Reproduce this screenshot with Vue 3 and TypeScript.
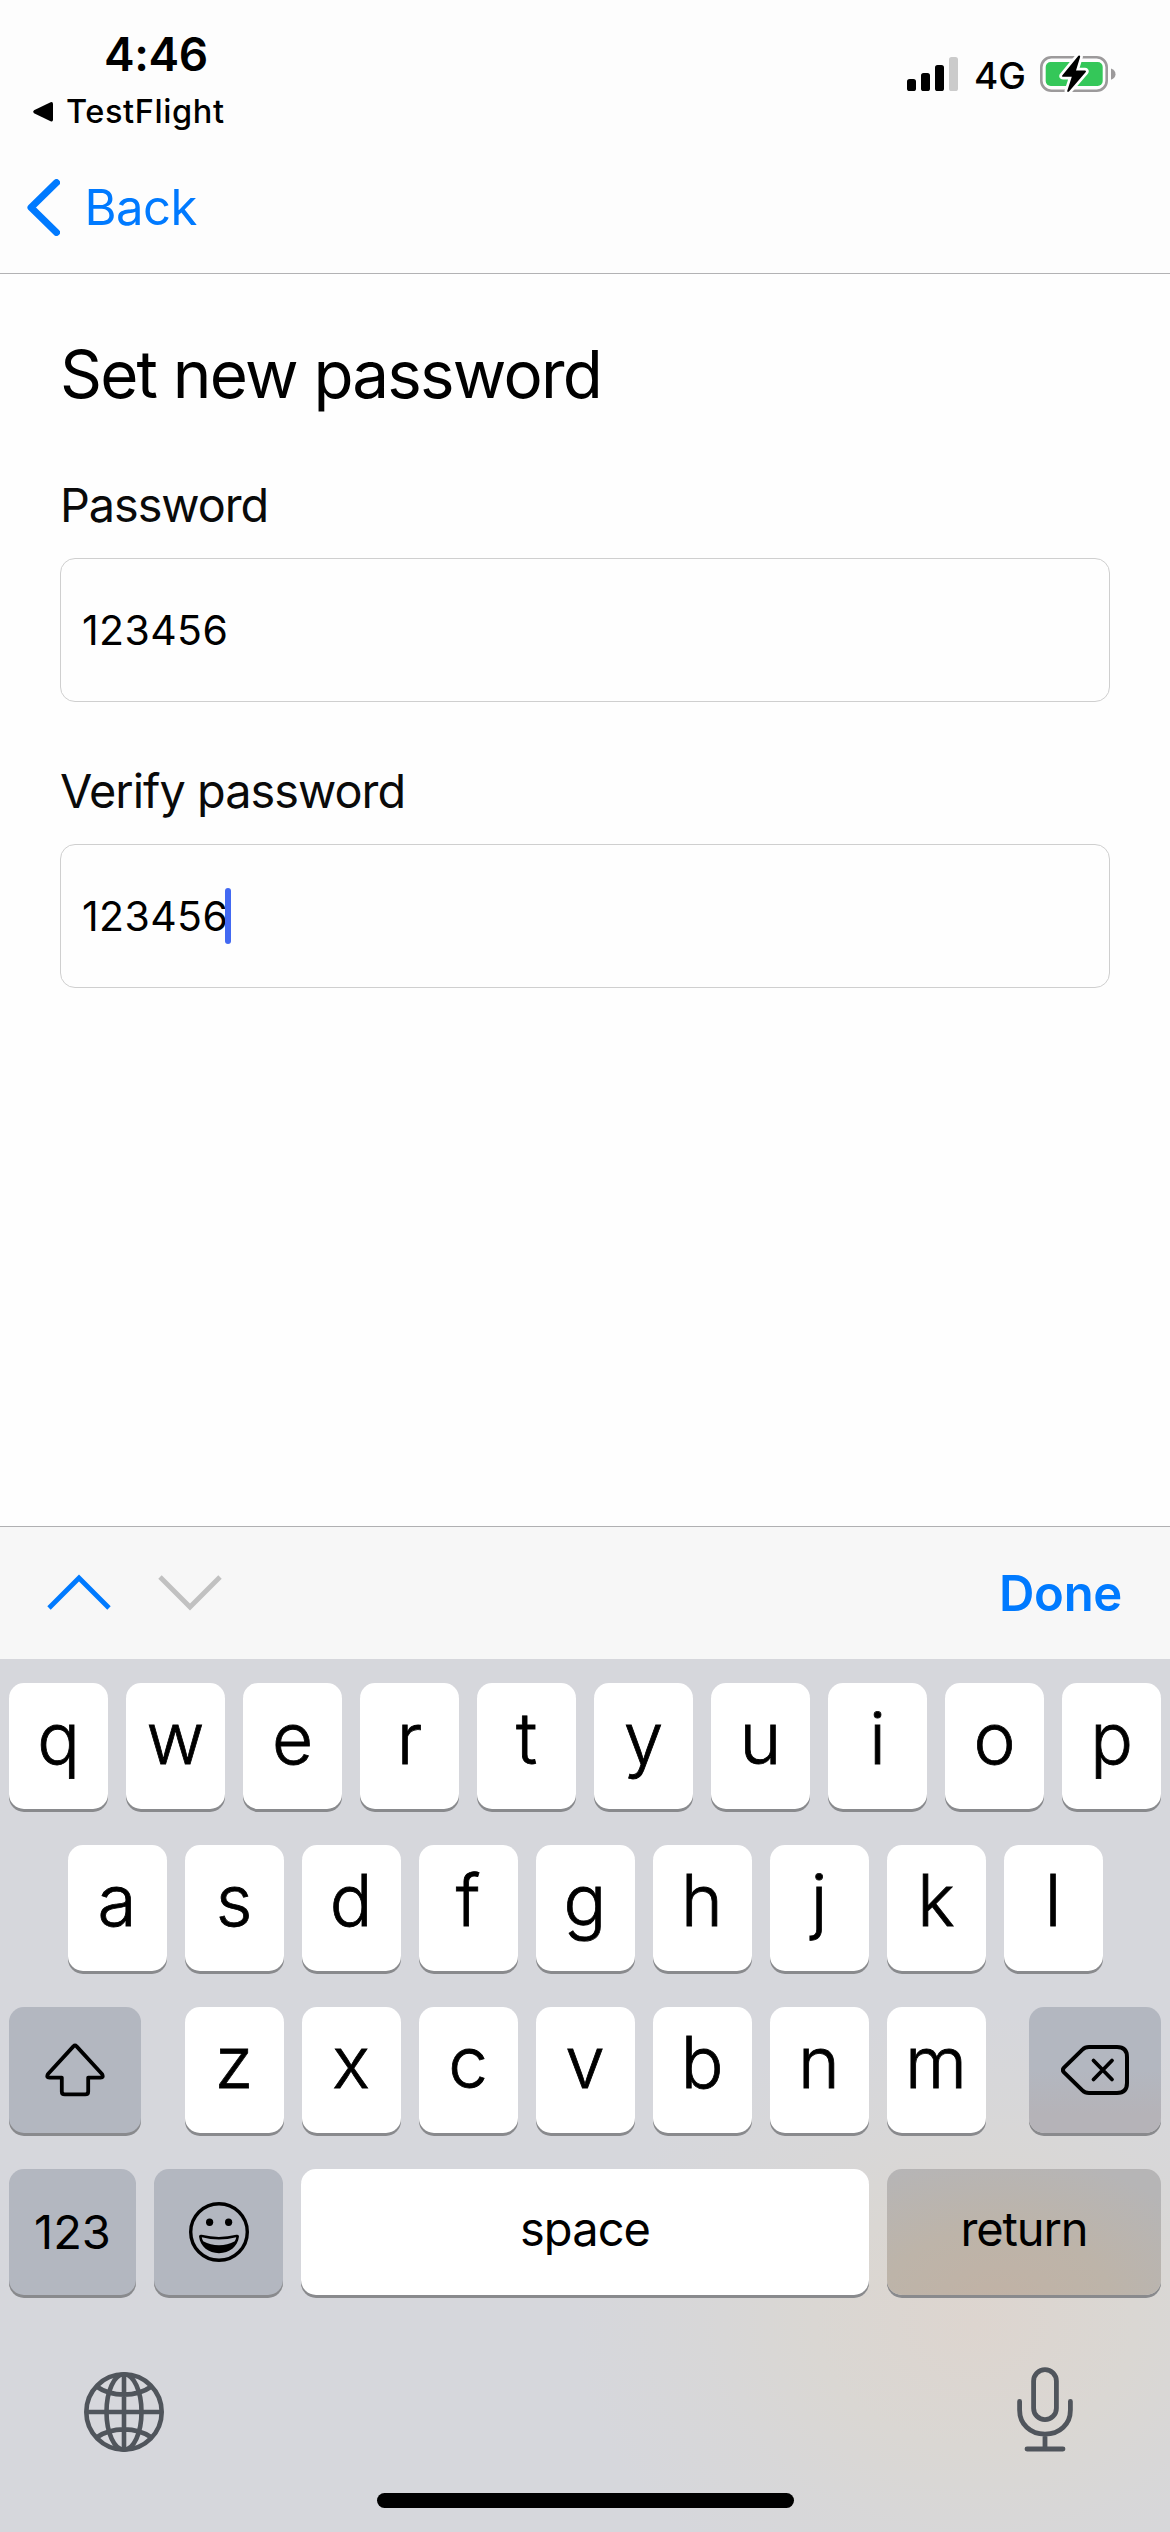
<script setup lang="ts">
import { ref } from 'vue'

const password = ref('123456')
const verify = ref('123456')

const topRow: string[] = [...'qwertyuiop']
const homeRow: string[] = [...'asdfghjkl']
const bottomRow: string[] = [...'zxcvbnm']
</script>

<template>
  <div class="screen">
    <header class="header">
      <div class="status">
        <div class="status-left">
          <div class="time">4:46</div>
          <div class="return-app">
            <svg width="22" height="22" viewBox="0 0 22 22">
              <path d="M2 9.3 L18.6 1.2 Q21 .4 21 3 V18.6 Q21 21.2 18.6 20.2 L2 12.2 Q.2 10.8 2 9.3Z" />
            </svg>
            <span>TestFlight</span>
          </div>
        </div>
        <div class="status-right">
          <svg class="signal" width="51" height="34" viewBox="0 0 51 34">
            <rect x="0" y="22" width="9" height="12" rx="2.6" />
            <rect x="14" y="16" width="9" height="18" rx="2.6" />
            <rect x="28" y="8" width="9" height="26" rx="2.6" />
            <rect x="42" y="0" width="9" height="34" rx="2.6" fill="#cbcbcb" />
          </svg>
          <span class="network">4G</span>
          <svg class="battery" width="76" height="40" viewBox="0 0 76 40">
            <rect x="1.3" y="3.3" width="65.4" height="33.4" rx="10" fill="none" stroke="#9c9a9b" stroke-width="2.6" />
            <rect x="5.7" y="8" width="57" height="24" rx="5" fill="#34c759" />
            <path d="M71 14.6 Q75.5 16.5 75.5 20.2 Q75.5 24 71 25.8Z" fill="#9c9a9b" />
            <path
              d="M38.4 1.8 L22.2 21.4 Q21.4 22.8 23 22.8 H31.8 L27.2 37 Q27.4 38.6 29 37.6 L45.8 18 Q46.6 16.6 45 16.5 H36 L40.2 2.8 Q40 1 38.4 1.8Z"
              fill="#000" stroke="#fff" stroke-width="5.4" stroke-linejoin="round" paint-order="stroke"
            />
          </svg>
        </div>
      </div>
      <nav class="nav">
        <svg width="33" height="57" viewBox="0 0 33 57">
          <path d="M29.5 3.6 L4 28.5 L29.5 53.4" fill="none" stroke="#007aff" stroke-width="7" stroke-linecap="round" stroke-linejoin="round" />
        </svg>
        <span>Back</span>
      </nav>
    </header>

    <main class="content">
      <h1>Set new password</h1>
      <label class="first">Password</label>
      <div class="field"><span>{{ password }}</span></div>
      <label class="second">Verify password</label>
      <div class="field"><span>{{ verify }}</span><i class="caret"></i></div>
    </main>

    <div class="toolbar">
      <svg class="up" width="64" height="37" viewBox="0 0 64 37">
        <path d="M2 34 L32 4 L62 34" fill="none" stroke="#007aff" stroke-width="4.8" />
      </svg>
      <svg class="down" width="64" height="37" viewBox="0 0 64 37">
        <path d="M2 3 L32 33 L62 3" fill="none" stroke="#c1c1c1" stroke-width="4.8" />
      </svg>
      <span class="done">Done</span>
    </div>

    <section class="keyboard">
      <div class="row">
        <div v-for="k in topRow" :key="k" class="key letter">{{ k }}</div>
      </div>
      <div class="row">
        <div v-for="k in homeRow" :key="k" class="key letter">{{ k }}</div>
      </div>
      <div class="row spread">
        <div class="key dark wide">
          <svg width="60" height="54" viewBox="0 0 60 54">
            <path
              d="M28.4 3.4 Q30 1.8 31.6 3.4 L57 31 Q59 34.6 55.6 34.6 H43.2 V48.4 Q43.2 51.4 40.2 51.4 H19.8 Q16.8 51.4 16.8 48.4 V34.6 H4.4 Q1 34.6 3 31Z"
              fill="none" stroke="#000" stroke-width="3.8" stroke-linejoin="round"
            />
          </svg>
        </div>
        <div class="letters">
          <div v-for="k in bottomRow" :key="k" class="key letter">{{ k }}</div>
        </div>
        <div class="key dark wide delete">
          <svg width="68" height="50" viewBox="0 0 68 50">
            <path
              d="M3 22.6 L21.4 4.6 Q24 2 28 2 H56 Q66 2 66 12 V38 Q66 48 56 48 H28 Q24 48 21.4 45.4 L3 27.4 Q.8 25 3 22.6Z"
              fill="none" stroke="#000" stroke-width="4" stroke-linejoin="round"
            />
            <path d="M32.5 15.5 L51 34.5 M51 15.5 L32.5 34.5" stroke="#000" stroke-width="3.8" stroke-linecap="round" />
          </svg>
        </div>
      </div>
      <div class="row">
        <div class="key dark numbers">123</div>
        <div class="key dark emoji">
          <svg width="60" height="60" viewBox="0 0 60 60">
            <circle cx="30" cy="30" r="28.3" fill="none" stroke="#000" stroke-width="3.4" />
            <ellipse cx="20.6" cy="20.3" rx="3.6" ry="3.7" />
            <ellipse cx="39.6" cy="20.3" rx="3.6" ry="3.7" />
            <path d="M10 34.6 Q10 32.2 12.6 32.8 Q30 37 47.4 32.8 Q50 32.2 50 34.6 C48.6 45 40.4 51.2 30 51.2 S11.4 45 10 34.6Z" />
            <path d="M12.8 35.2 Q30 39.8 47.2 35.2 Q47 37.4 45.8 39.2 Q38.500 43.200 30 43.200 T14.200 39.200 Q13 37.400 12.800 35.200Z" fill="#b3b7c0" />
          </svg>
        </div>
        <div class="key space">space</div>
        <div class="key dark enter">return</div>
      </div>
      <div class="footer">
        <svg width="80" height="80" viewBox="0 0 80 80" fill="none" stroke="#50555c" stroke-width="4.6">
          <circle cx="40" cy="40" r="37.7" />
          <ellipse cx="40" cy="40" rx="17.5" ry="37.7" />
          <path d="M40 2 V78 M2 40 H78 M12.5 14.5 Q24 22.6 40 22.6 T67.5 14.5 M12.5 65.5 Q24 57.4 40 57.4 T67.5 65.5" />
        </svg>
        <svg width="56" height="85" viewBox="0 0 56 85" fill="none" stroke="#50555c" stroke-width="4.8" stroke-linecap="round">
          <rect x="16.6" y="2.6" width="22.8" height="50" rx="11.4" />
          <path d="M2.6 34.4 V43 C2.6 57 13 67.2 28 67.2 S53.4 57 53.4 43 V34.4 M28 67.2 V82 M10 82 H46" />
        </svg>
      </div>
      <div class="home"></div>
    </section>
  </div>
</template>

<style>
body {
  background: #fff;
}
</style>

<style scoped>
.screen {
  display: flex;
  flex-direction: column;
  width: 1170px;
  height: 2532px;
  overflow: hidden;
  background: #fefefe;
  color: #000;
  font-family: Inter, 'Liberation Sans', sans-serif;
  white-space: nowrap;
}
svg {
  display: block;
  flex: none;
}
.header {
  height: 273px;
  box-sizing: content-box;
  border-bottom: 1px solid #b2b2b4;
  background: #fdfdfd;
}
.status {
  display: flex;
  justify-content: space-between;
  height: 140px;
}
.time {
  margin: 28px 0 0 104px;
  font-size: 46px;
  font-weight: 600;
  line-height: 52px;
  letter-spacing: -0.4px;
}
.return-app {
  display: flex;
  align-items: center;
  gap: 12px;
  height: 40px;
  margin: 12px 0 0 32px;
  font-size: 32.5px;
  font-weight: 500;
  line-height: 40px;
  letter-spacing: 0.6px;
}
.status-right {
  display: flex;
  align-items: center;
  height: 40px;
  margin: 54px 54px 0 0;
}
.network {
  margin: 3px 0 0 16px;
  width: 66px;
  font-size: 37px;
  font-weight: 500;
  line-height: 40px;
}
.nav {
  display: flex;
  align-items: center;
  height: 134px;
  padding-left: 27px;
  gap: 24.5px;
  color: #007aff;
  font-size: 49px;
  letter-spacing: -0.5px;
}
.content {
  flex: 1;
  padding: 0 60px;
}
h1 {
  margin: 61px 0 0;
  font-size: 65.5px;
  font-weight: 400;
  line-height: 80px;
  letter-spacing: -1.8px;
}
label {
  display: block;
  height: 60px;
  margin-top: 60px;
  font-size: 46.8px;
  line-height: 60px;
  letter-spacing: -1.05px;
  color: #0a0a0a;
}
label.second {
  margin-top: 59px;
  letter-spacing: -0.95px;
}
.field {
  display: flex;
  align-items: center;
  box-sizing: border-box;
  height: 144px;
  margin-top: 23px;
  padding-left: 21px;
  border: 1px solid #cfcfcf;
  border-radius: 15px;
  font-size: 41px;
  letter-spacing: 0.4px;
}
.caret {
  width: 6px;
  height: 56px;
  margin-left: -3px;
  border-radius: 3px;
  background: #4269f2;
}
.toolbar {
  display: flex;
  align-items: center;
  box-sizing: border-box;
  height: 133px;
  padding: 0 48px 0 47px;
  border-top: 1px solid #b0b0b2;
  background: #f7f7f7;
}
.up,
.down {
  margin-top: -1px;
}
.down {
  margin-left: 47px;
}
.done {
  margin-left: auto;
  color: #007aff;
  font-size: 49px;
  font-weight: 600;
  letter-spacing: -0.3px;
}
.keyboard {
  display: flex;
  flex-direction: column;
  gap: 36px;
  box-sizing: border-box;
  height: 873px;
  padding: 24px 9px 0;
  background:
    radial-gradient(ellipse 400px 310px at 975px 665px, #ddd5cf 0%, #dad7d3 40%, rgba(216, 215, 215, 0.8) 68%, rgba(214, 215, 220, 0) 100%),
    #d6d7dc;
}
.row {
  display: flex;
  justify-content: center;
  gap: 18px;
  height: 126px;
}
.row.spread {
  justify-content: space-between;
}
.letters {
  display: flex;
  gap: 18px;
}
.key {
  display: flex;
  align-items: center;
  justify-content: center;
  box-sizing: border-box;
  height: 126px;
  border-radius: 15px;
  background: #fff;
  box-shadow: 0 3px 0 #898a8d;
  font-size: 47px;
}
.letter {
  width: 99px;
  padding-bottom: 17px;
  font-size: 71px;
  font-weight: 300;
  -webkit-text-stroke: 0.8px #000;
}
.dark {
  background: #b3b7c0;
}
.wide {
  width: 132px;
}
.delete {
  background: linear-gradient(#b3b7c0 50%, #b5b3b8 85%);
}
.numbers {
  width: 127px;
  padding-bottom: 2px;
}
.emoji {
  width: 129px;
}
.space {
  width: 568px;
  padding-bottom: 8px;
  letter-spacing: -0.9px;
}
.enter {
  width: 274px;
  padding-bottom: 8px;
  letter-spacing: -1.1px;
  background: radial-gradient(ellipse 230px 150px at 110px 135px, #c1b2a5 0%, #bdb4a9 50%, #b6b5b6 100%);
}
.footer {
  display: flex;
  justify-content: space-between;
  align-items: flex-end;
  height: 85px;
  margin-top: 36px;
  padding: 0 88px 0 75px;
}
.home {
  width: 417px;
  height: 15px;
  margin: 5px auto 0;
  border-radius: 8px;
  background: #000;
}
</style>
